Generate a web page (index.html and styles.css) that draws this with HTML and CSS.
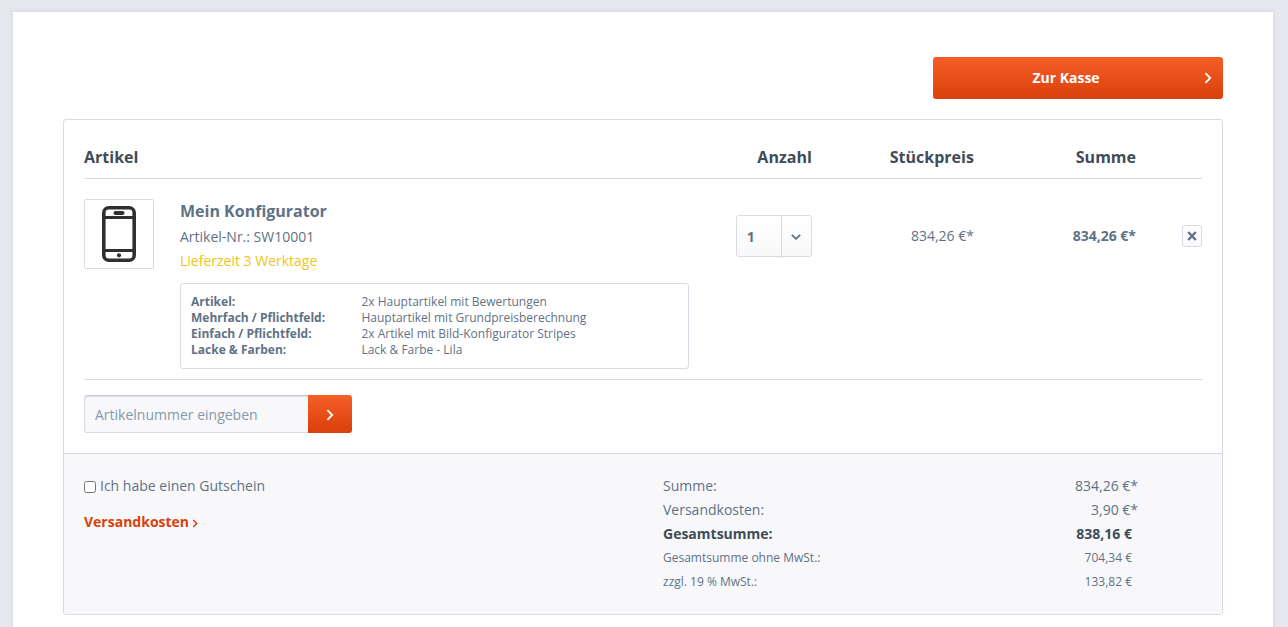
FILE: index.html
```html
<!DOCTYPE html>
<html lang="de">
<head>
<meta charset="utf-8">
<meta name="viewport" content="width=device-width, initial-scale=1">
<title>Warenkorb</title>
<link rel="stylesheet" href="styles.css">
</head>
<body>
<main class="page">
  <div class="actions">
    <a class="btn checkout" href="#kasse">
      <span class="checkout-label">Zur Kasse</span>
      <svg class="chevron" width="8" height="12" viewBox="0 0 8 12" aria-hidden="true"><path d="M1.4 1.2 6.2 6 1.4 10.8"/></svg>
    </a>
  </div>

  <section class="panel">
    <div class="cart">
      <table class="items">
        <colgroup>
          <col><col class="col-quantity"><col class="col-price"><col class="col-price"><col class="col-remove">
        </colgroup>
        <thead>
          <tr>
            <th scope="col">Artikel</th>
            <th scope="col" class="num">Anzahl</th>
            <th scope="col" class="num">Stückpreis</th>
            <th scope="col" class="num">Summe</th>
            <td></td>
          </tr>
        </thead>
        <tbody>
          <tr>
            <td class="article-cell">
              <div class="article">
                <a class="thumb" href="#artikel" aria-label="Mein Konfigurator">
                  <svg width="34" height="56" viewBox="0 0 34 56" aria-hidden="true">
                    <rect class="phone-body" x="1.8" y="1.8" width="30.4" height="52.4" rx="5"/>
                    <path class="phone-line" d="M2 11.5h30M2 44.5h30"/>
                    <rect class="phone-fill" x="11.5" y="4.9" width="11" height="4" rx="2"/>
                    <circle class="phone-fill" cx="17" cy="49.3" r="2.1"/>
                  </svg>
                </a>
                <div class="details">
                  <a class="name" href="#artikel">Mein Konfigurator</a>
                  <p class="line">Artikel-Nr.: SW10001</p>
                  <p class="line delivery">Lieferzeit 3 Werktage</p>
                  <dl class="config">
                    <dt>Artikel:</dt><dd>2x Hauptartikel mit Bewertungen</dd>
                    <dt>Mehrfach / Pflichtfeld:</dt><dd>Hauptartikel mit Grundpreisberechnung</dd>
                    <dt>Einfach / Pflichtfeld:</dt><dd>2x Artikel mit Bild-Konfigurator Stripes</dd>
                    <dt>Lacke &amp; Farben:</dt><dd>Lack &amp; Farbe - Lila</dd>
                  </dl>
                </div>
              </div>
            </td>
            <td class="control-cell num">
              <span class="quantity">
                <select aria-label="Anzahl">
                  <option selected>1</option><option>2</option><option>3</option><option>4</option><option>5</option>
                </select>
                <span class="quantity-arrow">
                  <svg width="10" height="6" viewBox="0 0 10 6" aria-hidden="true"><path d="M.8.8 5 4.8 9.2.8"/></svg>
                </span>
              </span>
            </td>
            <td class="control-cell num">834,26&nbsp;€*</td>
            <td class="control-cell num total">834,26&nbsp;€*</td>
            <td class="control-cell">
              <div class="remove-wrap">
                <button class="remove" type="button" aria-label="Artikel entfernen">
                  <svg width="10" height="10" viewBox="0 0 10 10" aria-hidden="true"><path d="M1.2 1l7.6 8M8.8 1l-7.6 8"/></svg>
                </button>
              </div>
            </td>
          </tr>
        </tbody>
      </table>

      <form class="add">
        <input class="add-field" type="text" placeholder="Artikelnummer eingeben" aria-label="Artikelnummer eingeben">
        <button class="btn add-button" type="button" aria-label="Hinzufügen">
          <svg class="chevron" width="8" height="12" viewBox="0 0 8 12" aria-hidden="true"><path d="M1.4 1.2 6.2 6 1.4 10.8"/></svg>
        </button>
      </form>
    </div>

    <div class="summary">
      <div class="options">
        <label class="voucher"><input type="checkbox">Ich habe einen Gutschein</label>
        <a class="shipping" href="#versandkosten">Versandkosten
          <svg width="6" height="9" viewBox="0 0 6 9" aria-hidden="true"><path d="M1.2 1 4.7 4.5 1.2 8"/></svg>
        </a>
      </div>
      <dl class="sums">
        <div class="sum"><dt>Summe:</dt><dd>834,26&nbsp;€*</dd></div>
        <div class="sum"><dt>Versandkosten:</dt><dd>3,90&nbsp;€*</dd></div>
        <div class="sum plain grand"><dt>Gesamtsumme:</dt><dd>838,16&nbsp;€</dd></div>
        <div class="sum plain small"><dt>Gesamtsumme ohne MwSt.:</dt><dd>704,34&nbsp;€</dd></div>
        <div class="sum plain small"><dt>zzgl. 19&nbsp;% MwSt.:</dt><dd>133,82&nbsp;€</dd></div>
      </dl>
    </div>
  </section>
</main>
</body>
</html>
```
FILE: styles.css
```css
* { box-sizing: border-box; }

body {
  display: flex;
  flex-direction: column;
  min-height: 100vh;
  margin: 0;
  padding: 12px 15px 0 13px;
  background: #e7e7f0;
  color: #5f7285;
  font: 14px/24px "Open Sans", "Noto Sans", sans-serif;
  -webkit-font-smoothing: antialiased;
}

p, dl, dd { margin: 0; }
a { color: inherit; text-decoration: none; }
svg { display: block; fill: none; }
input, select, button { font: inherit; color: inherit; }

.page {
  flex: 1;
  padding: 45px 50px 12px;
  background: #fff;
  box-shadow: 0 0 4px 1px #d8d8e2;
}

.actions {
  display: flex;
  justify-content: flex-end;
  margin-bottom: 20px;
}

.btn {
  display: flex;
  align-items: center;
  border: 0;
  background: linear-gradient(#f65e27, #d9400b);
  color: #fff;
  font-weight: 700;
  cursor: pointer;
}

.checkout {
  width: 25%;
  height: 42px;
  padding: 0 11px;
  border-radius: 3px;
}
.checkout-label { flex: 1; padding-right: 16px; text-align: center; }
.chevron { stroke: #fff; stroke-width: 1.8; }

.panel {
  border: 1px solid #dadae5;
  border-radius: 3px;
  overflow: hidden;
}

.cart { padding: 20px; }

.items {
  width: 100%;
  border-collapse: separate;
  border-spacing: 0;
  table-layout: fixed;
}
.col-quantity { width: 10%; }
.col-price { width: 14.5%; }
.col-remove { width: 66px; }

.items th,
.items td {
  padding: 0;
  border-bottom: 1px solid #dadae5;
  text-align: left;
  vertical-align: top;
}
.items th {
  padding: 5px 0 9px;
  color: #3f4c58;
  font-size: 16px;
  font-weight: 700;
}
.items .num { text-align: right; }
.items .article-cell { padding: 20px 11px 10px 0; }
.items .control-cell { padding-top: 36px; line-height: 42px; }
.total { font-weight: 700; }

.article { display: flex; gap: 26px; }

.thumb {
  display: flex;
  flex: none;
  align-items: center;
  justify-content: center;
  width: 70px;
  height: 70px;
  border: 1px solid #dadae5;
  border-radius: 2px;
}
.phone-body { stroke: #303030; stroke-width: 3.6; }
.phone-line { stroke: #303030; stroke-width: 3; }
.phone-fill { fill: #303030; }

.details { flex: 1; min-width: 0; }
.name {
  display: block;
  margin-bottom: 2px;
  font-size: 16px;
  font-weight: 700;
}
.delivery { color: #f0c419; }

.config {
  display: grid;
  grid-template-columns: 35% 1fr;
  margin-top: 10px;
  padding: 10px;
  border: 1px solid #dadae5;
  border-radius: 3px;
  font-size: 12px;
  line-height: 16px;
}
.config dt { font-weight: 700; }

.quantity {
  display: inline-grid;
  grid-template-columns: 1fr 30px;
  width: 76px;
  height: 42px;
  border: 1px solid #dadae5;
  border-radius: 3px;
  background: linear-gradient(#fff, #f8f8fa);
  vertical-align: top;
}
.quantity select {
  grid-area: 1 / 1 / 2 / 3;
  padding: 0 10px;
  border: 0;
  background: none;
  font-weight: 700;
  appearance: none;
}
.quantity-arrow {
  display: flex;
  grid-area: 1 / 2 / 2 / 3;
  align-items: center;
  justify-content: center;
  border-left: 1px solid #dadae5;
  pointer-events: none;
}
.quantity-arrow svg { stroke: #5f7285; stroke-width: 1.8; }

.remove-wrap {
  display: flex;
  align-items: center;
  justify-content: flex-end;
  height: 42px;
}
.remove {
  display: flex;
  align-items: center;
  justify-content: center;
  width: 20px;
  height: 22px;
  padding: 0;
  border: 1px solid #dadae5;
  border-radius: 3px;
  background: linear-gradient(#fff, #f8f8fa);
}
.remove svg { stroke: #5f7285; stroke-width: 2.3; }

.add { display: flex; height: 38px; margin-top: 15px; }
.add-field {
  width: 224px;
  padding: 2px 10px 0;
  border: 1px solid #dadae5;
  border-top-color: #cbcbdb;
  border-right: 0;
  border-radius: 3px 0 0 3px;
  background: #f8f8fa;
  box-shadow: inset 0 1px 1px #dadae5;
}
.add-field::placeholder { color: #8798a9; }
.add-button {
  justify-content: center;
  width: 44px;
  padding: 2px 0 0;
  border-radius: 0 3px 3px 0;
}

.summary {
  display: grid;
  grid-template-columns: 1fr 1fr;
  padding: 20px 0;
  border-top: 1px solid #dadae5;
  background: #f8f8fa;
}
.options {
  display: flex;
  flex-direction: column;
  align-items: flex-start;
  gap: 12px;
  padding-left: 20px;
}
.voucher { display: flex; align-items: center; gap: 4px; }
.voucher input { width: 12px; height: 12px; margin: 2px 0 0; }
.shipping {
  display: flex;
  align-items: center;
  gap: 3px;
  color: #d9400b;
  font-weight: 700;
}
.shipping svg { margin-top: 3px; stroke: #d9400b; stroke-width: 1.5; }

.sums { padding: 0 84px 0 20px; }
.sum { display: flex; justify-content: space-between; }
.plain { padding-right: 6px; }
.grand { color: #3f4c58; font-weight: 700; }
.small { font-size: 12px; }
```
